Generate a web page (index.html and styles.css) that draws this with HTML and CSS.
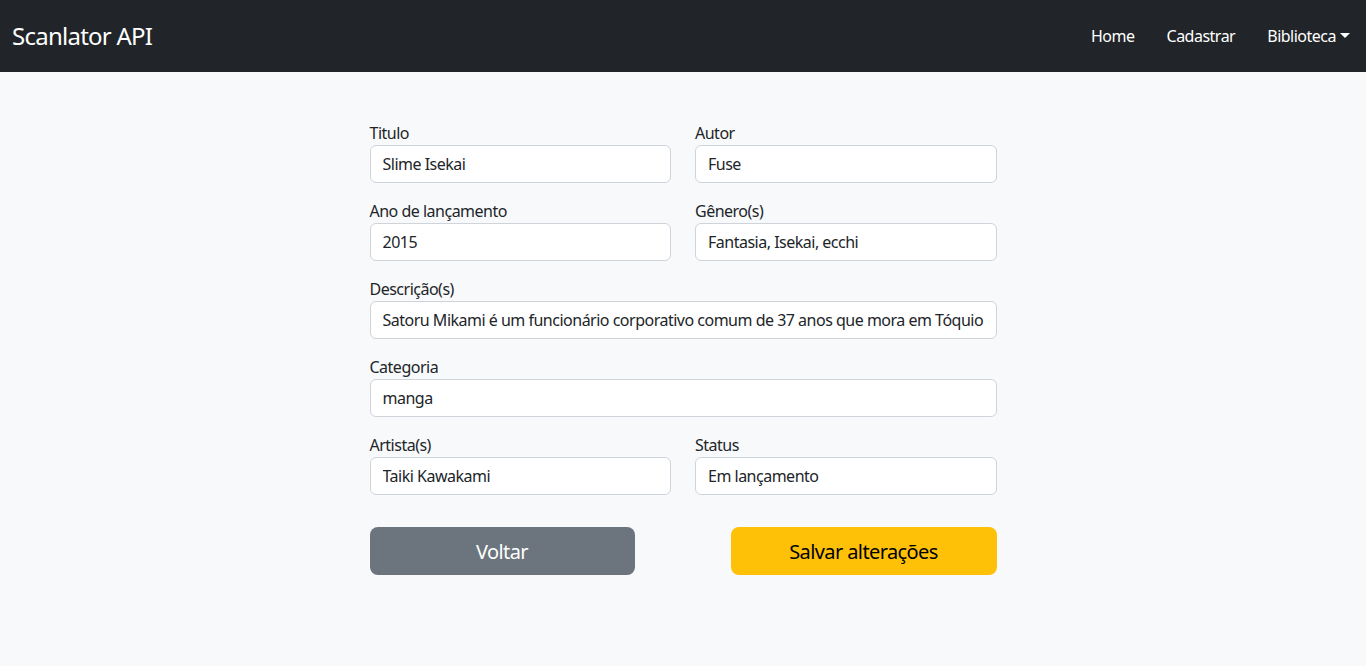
FILE: index.html
```html
<!DOCTYPE html>
<html lang="pt-BR">
<head>
<meta charset="utf-8">
<title>Scanlator API</title>
<link rel="stylesheet" href="styles.css">
</head>
<body>
<nav class="navbar">
  <a class="brand" href="#">Scanlator API</a>
  <ul class="nav-links">
    <li><a href="#">Home</a></li>
    <li><a href="#">Cadastrar</a></li>
    <li><a href="#" class="dropdown-toggle">Biblioteca</a></li>
  </ul>
</nav>
<main class="content">
  <form class="form">
    <div class="row">
      <div class="field">
        <label>Titulo</label>
        <input type="text" value="Slime Isekai">
      </div>
      <div class="field">
        <label>Autor</label>
        <input type="text" value="Fuse">
      </div>
    </div>
    <div class="row">
      <div class="field">
        <label>Ano de lançamento</label>
        <input type="text" value="2015">
      </div>
      <div class="field">
        <label>Gênero(s)</label>
        <input type="text" value="Fantasia, Isekai, ecchi">
      </div>
    </div>
    <div class="row">
      <div class="field">
        <label>Descrição(s)</label>
        <input type="text" value="Satoru Mikami é um funcionário corporativo comum de 37 anos que mora em Tóquio">
      </div>
    </div>
    <div class="row">
      <div class="field">
        <label>Categoria</label>
        <input type="text" value="manga">
      </div>
    </div>
    <div class="row">
      <div class="field">
        <label>Artista(s)</label>
        <input type="text" value="Taiki Kawakami">
      </div>
      <div class="field">
        <label>Status</label>
        <input type="text" value="Em lançamento">
      </div>
    </div>
    <div class="actions">
      <button type="button" class="btn btn-secondary">Voltar</button>
      <button type="button" class="btn btn-warning">Salvar alterações</button>
    </div>
  </form>
</main>
</body>
</html>
```
FILE: styles.css
```css
* { box-sizing: border-box; }
html, body { margin: 0; padding: 0; }
body {
  font-family: "Noto Sans", "Open Sans", sans-serif;
  font-size: 16px;
  line-height: 24px;
  letter-spacing: -0.5px;
  color: #212529;
  background: #f8f9fa;
  height: 666px;
}
.navbar {
  height: 72px;
  background: #212529;
  display: flex;
  align-items: center;
  justify-content: space-between;
  padding: 0 16px 0 12px;
}
.brand {
  color: #fff;
  text-decoration: none;
  font-size: 24px;
  line-height: 30px;
  letter-spacing: -0.75px;
}
.nav-links {
  list-style: none;
  margin: 0;
  padding: 0;
  display: flex;
  gap: 32px;
}
.nav-links a {
  color: #fff;
  text-decoration: none;
  font-size: 16px;
}
.dropdown-toggle::after {
  content: "";
  display: inline-block;
  margin-left: 4px;
  vertical-align: 4px;
  border-top: 5px solid #fff;
  border-left: 5px solid transparent;
  border-right: 5px solid transparent;
}
.content {
  display: flex;
  justify-content: center;
  padding-top: 49px;
}
.form {
  width: 627px;
}
.row {
  display: flex;
  gap: 24px;
  margin-bottom: 16px;
}
.field {
  flex: 1;
  display: flex;
  flex-direction: column;
}
.field label {
  font-size: 16px;
  line-height: 24px;
  color: #212529;
}
.field input {
  height: 38px;
  border: 1px solid #ced4da;
  border-radius: 6px;
  background: #fff;
  padding: 0 12px;
  font-family: inherit;
  font-size: 16px;
  letter-spacing: -0.5px;
  color: #212529;
  outline: none;
}
.actions {
  display: flex;
  justify-content: space-between;
  margin-top: 32px;
}
.btn {
  width: 265px;
  height: 48px;
  border: 0;
  border-radius: 8px;
  font-family: inherit;
  font-size: 20px;
  letter-spacing: -0.6px;
}
.btn-secondary { background: #6c757d; color: #fff; }
.btn-warning { background: #ffc107; color: #000; width: 266px; }
```
